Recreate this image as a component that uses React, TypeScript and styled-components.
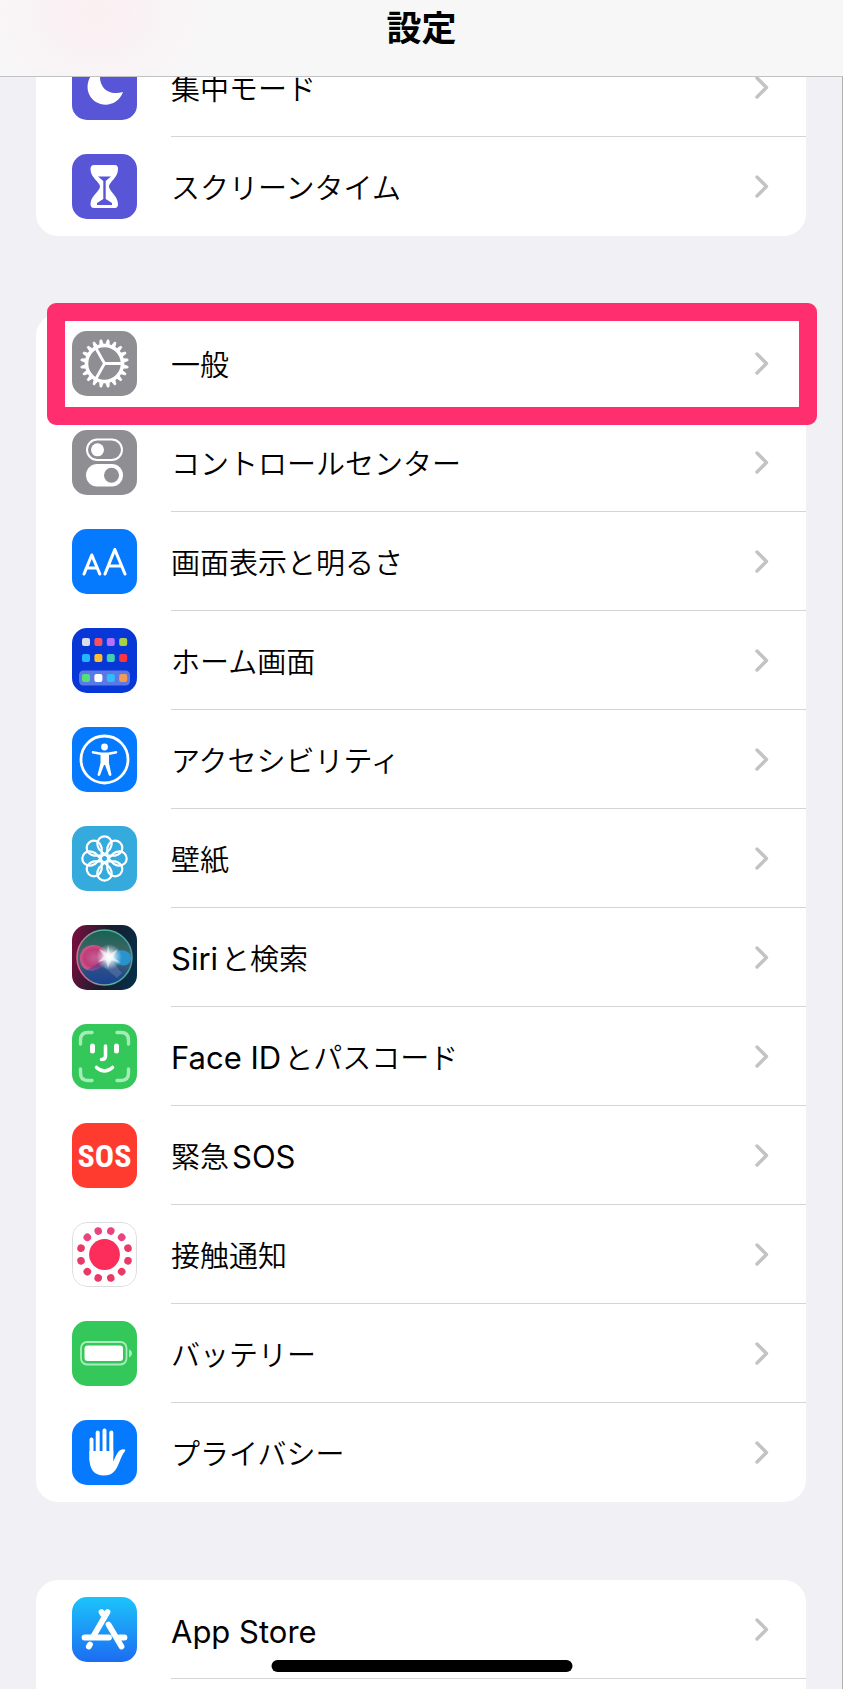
import React, { ReactNode } from "react";
import styled, { createGlobalStyle, css } from "styled-components";

const GlobalStyle = createGlobalStyle`
  *, *::before, *::after { box-sizing: border-box; }
  body {
    margin: 0;
    background: #f0f0f5;
    color: #000;
    font-family: Inter, "Noto Sans CJK JP", sans-serif;
  }
`;

const Page = styled.div`
  display: flex;
  flex-direction: column;
  min-height: 100vh;
  border-right: 1px solid #b0b0b3;
`;

const Header = styled.header`
  position: fixed;
  top: 0;
  left: 0;
  right: 0;
  z-index: 2;
  height: 77px;
  padding-top: 8px;
  border-bottom: 1px solid #c2c2c5;
  background:
    radial-gradient(ellipse 120px 100px at 96px 10px, #fbeef1 0%, rgba(250, 241, 244, 0.7) 50%, rgba(247, 247, 247, 0) 100%),
    #f7f7f7;
`;

const Title = styled.h1`
  margin: 0;
  text-align: center;
  font-size: 35px;
  line-height: 40px;
  font-weight: 700;
`;

const Content = styled.main`
  flex: 1;
  display: flex;
  flex-direction: column;
  gap: 78px;
  padding: 0 36px;
`;

const Group = styled.ul<{ $edge?: "start" | "end" }>`
  margin: 0;
  padding: 0;
  list-style: none;
  background: #fff;
  border-radius: 22px;
  ${(p) =>
    p.$edge === "start" &&
    css`
      padding-top: 38px;
      border-top-left-radius: 0;
      border-top-right-radius: 0;
    `}
  ${(p) =>
    p.$edge === "end" &&
    css`
      flex: 1;
      padding-bottom: 10px;
      border-bottom-left-radius: 0;
      border-bottom-right-radius: 0;
    `}
`;

const Item = styled.li`
  position: relative;
`;

const RowLink = styled.a`
  display: flex;
  height: 99px;
  padding-left: 36px;
  gap: 34px;
  align-items: center;
  color: inherit;
  text-decoration: none;
`;

const RowBody = styled.span<{ $divider: boolean }>`
  flex: 1;
  align-self: stretch;
  display: flex;
  align-items: center;
  justify-content: space-between;
  padding-right: 36px;
  border-bottom: 1px solid ${(p) => (p.$divider ? "#d5d5d8" : "transparent")};
`;

const Label = styled.span`
  display: flex;
  align-items: baseline;
  gap: 3px;
  padding-top: 5px;
  font-size: 29px;
  line-height: 40px;
  font-weight: 350;
  white-space: nowrap;
`;

const Latin = styled.span`
  font-size: 31px;
  font-weight: 400;
`;

const IconBox = styled.svg`
  flex: none;
  width: 65px;
  height: 65px;
  border-radius: 15px;
`;

const ChevronIcon = styled.svg`
  flex: none;
  width: 16px;
  height: 24px;
`;

const Highlight = styled.span`
  position: absolute;
  z-index: 1;
  inset: -11px -11px -12px 11px;
  border: 18px solid #ff2e6e;
  border-radius: 9px;
  pointer-events: none;
`;

const HomeIndicator = styled.div`
  position: fixed;
  z-index: 2;
  left: 50%;
  bottom: 17px;
  width: 301px;
  height: 12px;
  border-radius: 6px;
  background: #000;
  transform: translateX(-50%);
`;

const Tile = ({ fill, children }: { fill: string; children: ReactNode }) => (
  <IconBox viewBox="0 0 65 65" aria-hidden="true">
    <rect width="65" height="65" fill={fill} />
    {children}
  </IconBox>
);

const range = (n: number) => Array.from({ length: n }, (_, i) => i);

const FocusIcon = () => (
  <Tile fill="#5856d6">
    <path d="M29 13C18 17 13 29 17 39C23 53 45 54 51 37C38 41 24 34 29 13Z" fill="#fff" />
  </Tile>
);

const HourglassIcon = () => (
  <Tile fill="#5856d6">
    <path
      d="M22 11H43Q46 11 46 15C46 24 37 28 37 32.500C37 37 46 42 46 50Q46 54 43 54H22Q18.500 54 18.500 50C18.500 42 28 37 28 32.500C28 28 18.500 24 18.500 15Q18.500 11 22 11Z"
      fill="#fff"
    />
    <path d="M26 22.500H39L33.700 27V45L40 49V51H25V49L31.300 45V27Z" fill="#5856d6" />
  </Tile>
);

const GearIcon = () => (
  <Tile fill="#8e8e93">
    <g stroke="#fff" fill="none">
      <circle cx="32.500" cy="32.500" r="18" strokeWidth="3.600" />
      <g strokeWidth="2.800">
        <path d="M32.500 32.500H51M32.500 32.500L23.500 16.500M32.500 32.500L23.500 48.500" />
      </g>
      {range(20).map((i) => (
        <path key={i} d="M30.800 13L31.700 8.700H33.300L34.200 13Z" fill="#fff" strokeWidth=".8" transform={`rotate(${i * 18 + 9} 32.500 32.500)`} />
      ))}
    </g>
  </Tile>
);

const ControlIcon = () => (
  <Tile fill="#8e8e93">
    <rect x="15" y="9.500" width="35" height="20.500" rx="10.250" fill="none" stroke="#fff" strokeWidth="2" />
    <circle cx="25.500" cy="19.800" r="6.500" fill="#fff" />
    <rect x="14" y="34" width="37" height="22.500" rx="11.250" fill="#fff" />
    <circle cx="39.500" cy="45.200" r="7.500" fill="#8e8e93" />
  </Tile>
);

const DisplayIcon = () => (
  <Tile fill="#067aff">
    <g fill="none" stroke="#fff" strokeWidth="3.100" strokeLinecap="round" strokeLinejoin="round">
      <path d="M12 45L19.800 26L27.800 45M14.500 39H25.200" />
      <path d="M33 45L42.800 20.500L53 45M36.500 37H49.500" />
    </g>
  </Tile>
);

const homeDots = [
  ["#dcdde8", "#ff4f5e", "#b570ff", "#a8cf45"],
  ["#22b8ff", "#ffbe2e", "#3fd0b5", "#ff343c"],
  ["#52e07c", "#ffffff", "#31bdf5", "#f59a55"],
];

const HomeScreenIcon = () => (
  <Tile fill="#0837d8">
    <rect x="7" y="42.500" width="51" height="15" rx="4.500" fill="#5a78e6" />
    {homeDots.map((row, r) =>
      row.map((color, c) => (
        <rect key={`${r}-${c}`} x={10 + c * 12.4} y={[10, 26, 46][r]} width="8" height="8" rx="2" fill={color} />
      )),
    )}
  </Tile>
);

const AccessibilityIcon = () => (
  <Tile fill="#067aff">
    <circle cx="32.500" cy="32.500" r="23.500" fill="none" stroke="#fff" strokeWidth="2.800" />
    <circle cx="32.500" cy="20" r="3.400" fill="#fff" />
    <path
      d="M20.500 24L29 25.500H36L44.500 24Q46 25 44.500 26.600L37 28V36L39.500 48Q38 50 36.800 48L33 38H32L28.200 48Q27 50 25.500 48L28.500 36V28L20.500 26.600Q19 25 20.500 24Z"
      fill="#fff"
    />
  </Tile>
);

const WallpaperIcon = () => (
  <Tile fill="#35aadc">
    <g fill="none" stroke="#fff" strokeWidth="2.200">
      <circle cx="32.500" cy="32.500" r="3.600" />
      {range(8).map((i) => (
        <path
          key={i}
          d="M32.500 28.500L27 23Q25.300 20 25.300 17.500A7.200 7.200 0 1 1 39.700 17.500Q39.700 20 38 23Z"
          transform={`rotate(${i * 45} 32.500 32.500)`}
        />
      ))}
    </g>
  </Tile>
);

const SiriIcon = () => (
  <IconBox viewBox="0 0 65 65" aria-hidden="true">
    <defs>
      <linearGradient id="siriBase" x1="0" y1=".4" x2="1" y2=".6">
        <stop offset="0" stopColor="#71103d" />
        <stop offset=".5" stopColor="#1a1c2c" />
        <stop offset="1" stopColor="#062e46" />
      </linearGradient>
      <linearGradient id="siriOrb" x1="0" y1="0" x2="0" y2="1">
        <stop offset="0" stopColor="#15624f" />
        <stop offset=".5" stopColor="#4a666f" />
        <stop offset="1" stopColor="#0d3f86" />
      </linearGradient>
      <linearGradient id="siriRing" x1="0" y1=".5" x2="1" y2=".3">
        <stop offset="0" stopColor="#e4608d" />
        <stop offset=".5" stopColor="#4fb59c" />
        <stop offset="1" stopColor="#4a9ba5" />
      </linearGradient>
      <radialGradient id="siriPink">
        <stop offset="0" stopColor="#cf5f98" />
        <stop offset=".7" stopColor="#cd3878" />
        <stop offset="1" stopColor="#e05591" />
      </radialGradient>
      <radialGradient id="siriGlow">
        <stop offset="0" stopColor="#fff" />
        <stop offset=".3" stopColor="#fff" stopOpacity=".85" />
        <stop offset="1" stopColor="#cfeaff" stopOpacity="0" />
      </radialGradient>
    </defs>
    <rect width="65" height="65" fill="url(#siriBase)" />
    <circle cx="32.500" cy="32.500" r="27.500" fill="url(#siriOrb)" stroke="url(#siriRing)" strokeWidth="1.600" />
    <path d="M37 32C30 14 8 18 8 33C8 50 29 50 37 32Z" fill="url(#siriPink)" opacity=".9" />
    <path d="M37 32C44 22 59 24 59 33C59 43 45 43 37 32Z" fill="#269bdc" opacity=".85" />
    <path d="M36 32Q20 42 12 47Q18 59 34 59Q48 57 52 48Z" fill="#2546a0" opacity=".45" />
    <path d="M37 32L32 42L45 53L50 48Z" fill="#b7c7d0" opacity=".22" />
    <circle cx="37" cy="32" r="13" fill="url(#siriGlow)" />
    <path d="M36 20L38 29L46 24L41 32L49 38L39 35L36 43L34 35L26 37L32 31L27 24L35 28Z" fill="#fff" opacity=".55" />
  </IconBox>
);

const FaceIdIcon = () => (
  <Tile fill="#34c759">
    <g fill="none" strokeLinecap="round">
      <path
        d="M8.500 20V16Q8.500 8.500 16 8.500H20M45 8.500H49Q56.500 8.500 56.500 16V20M56.500 45V49Q56.500 56.500 49 56.500H45M20 56.500H16Q8.500 56.500 8.500 49V45"
        stroke="#a5edb8"
        strokeWidth="3.400"
      />
      <path d="M20.500 22V27M44.500 22V27" stroke="#fff" strokeWidth="5" />
      <path d="M33.500 22V32Q33.500 35.500 29.500 35.500M24.500 43.500Q32.500 50.500 40.500 43.500" stroke="#fff" strokeWidth="3.600" />
    </g>
  </Tile>
);

const SosIcon = () => (
  <Tile fill="#ff3b30">
    <text x="32.500" y="44" textAnchor="middle" fill="#fff" fontFamily="'Roboto Condensed', Roboto, sans-serif" fontSize="32" fontWeight="700">
      SOS
    </text>
  </Tile>
);

const ExposureIcon = () => (
  <Tile fill="#fff">
    <rect x=".5" y=".5" width="64" height="64" rx="14.500" fill="none" stroke="#dedee0" />
    <circle cx="32.500" cy="32.500" r="15.400" fill="#fc2c5b" />
    {range(12).map((i) => (
      <circle key={i} cx="32.500" cy="8.200" r="3.800" fill={i < 2 || i > 9 ? "#ea4380" : "#e93967"} transform={`rotate(${i * 30 + 15} 32.500 32.500)`} />
    ))}
  </Tile>
);

const BatteryIcon = () => (
  <Tile fill="#34c759">
    <rect x="9" y="21" width="45.500" height="22.500" rx="6" fill="none" stroke="#a9edba" strokeWidth="1.800" />
    <rect x="12.500" y="24.500" width="38.500" height="15.500" rx="3" fill="#fff" />
    <path d="M57 28.500Q60 29.500 60 32.300Q60 35 57 36.500Z" fill="#a9edba" />
  </Tile>
);

const HandIcon = () => (
  <Tile fill="#067aff">
    <g stroke="#fff" strokeWidth="4" strokeLinecap="round" fill="none">
      <path d="M19.500 19.500V40M25.700 12.500V36M32.500 10.500V36M39.300 12.500V36" />
    </g>
    <path
      d="M17.500 31H41.300V41.500Q45 33 47 31Q49.500 28.500 53 29.500Q54 30.500 52 32.500Q50 35 47 43C44 51 40 55.500 32 55.500C22 55.500 17.500 49 17.500 39Z"
      fill="#fff"
    />
  </Tile>
);

const AppStoreIcon = () => (
  <Tile fill="url(#storeBlue)">
    <defs>
      <linearGradient id="storeBlue" x1="0" y1="0" x2="0" y2="1">
        <stop offset="0" stopColor="#1cc4fb" />
        <stop offset="1" stopColor="#1c6cf2" />
      </linearGradient>
    </defs>
    <g stroke="#fff" strokeWidth="5.800" strokeLinecap="round" fill="none">
      <path d="M35.500 15L21.500 39M29.500 15L31 17.500M36.500 27.500L49.500 49.500M12.500 40.500H37M47.500 40.500H52.500M18 47.500L16.800 49.500" />
    </g>
  </Tile>
);

const Chevron = () => (
  <ChevronIcon viewBox="0 0 16 24" aria-hidden="true">
    <path d="M3 3L12.500 12.500L3 22" fill="none" stroke="#c3c3c6" strokeWidth="3.400" strokeLinecap="round" strokeLinejoin="round" />
  </ChevronIcon>
);

type Entry = { label: string; Icon: () => ReactNode; marked?: boolean };

const attention: Entry[] = [
  { label: "集中モード", Icon: FocusIcon },
  { label: "スクリーンタイム", Icon: HourglassIcon },
];

const system: Entry[] = [
  { label: "一般", Icon: GearIcon, marked: true },
  { label: "コントロールセンター", Icon: ControlIcon },
  { label: "画面表示と明るさ", Icon: DisplayIcon },
  { label: "ホーム画面", Icon: HomeScreenIcon },
  { label: "アクセシビリティ", Icon: AccessibilityIcon },
  { label: "壁紙", Icon: WallpaperIcon },
  { label: "Siriと検索", Icon: SiriIcon },
  { label: "Face IDとパスコード", Icon: FaceIdIcon },
  { label: "緊急SOS", Icon: SosIcon },
  { label: "接触通知", Icon: ExposureIcon },
  { label: "バッテリー", Icon: BatteryIcon },
  { label: "プライバシー", Icon: HandIcon },
];

const store: Entry[] = [{ label: "App Store", Icon: AppStoreIcon }];

// Latin runs are set slightly larger than the Japanese around them.
const splitScripts = (label: string) =>
  label
    .split(/([A-Za-z][A-Za-z ]*)/)
    .filter(Boolean)
    .map((part) => (/^[A-Za-z]/.test(part) ? <Latin key={part}>{part}</Latin> : <span key={part}>{part}</span>));

const SettingsGroup = ({ entries, edge }: { entries: Entry[]; edge?: "start" | "end" }) => (
  <Group $edge={edge}>
    {entries.map(({ label, Icon, marked }, i) => (
      <Item key={label}>
        <RowLink href="#">
          <Icon />
          <RowBody $divider={edge === "end" || i < entries.length - 1}>
            <Label>{splitScripts(label)}</Label>
            <Chevron />
          </RowBody>
        </RowLink>
        {marked && <Highlight />}
      </Item>
    ))}
  </Group>
);

export default function App() {
  return (
    <Page lang="ja">
      <GlobalStyle />
      <Header>
        <Title>設定</Title>
      </Header>
      <Content>
        <SettingsGroup entries={attention} edge="start" />
        <SettingsGroup entries={system} />
        <SettingsGroup entries={store} edge="end" />
      </Content>
      <HomeIndicator />
    </Page>
  );
}
